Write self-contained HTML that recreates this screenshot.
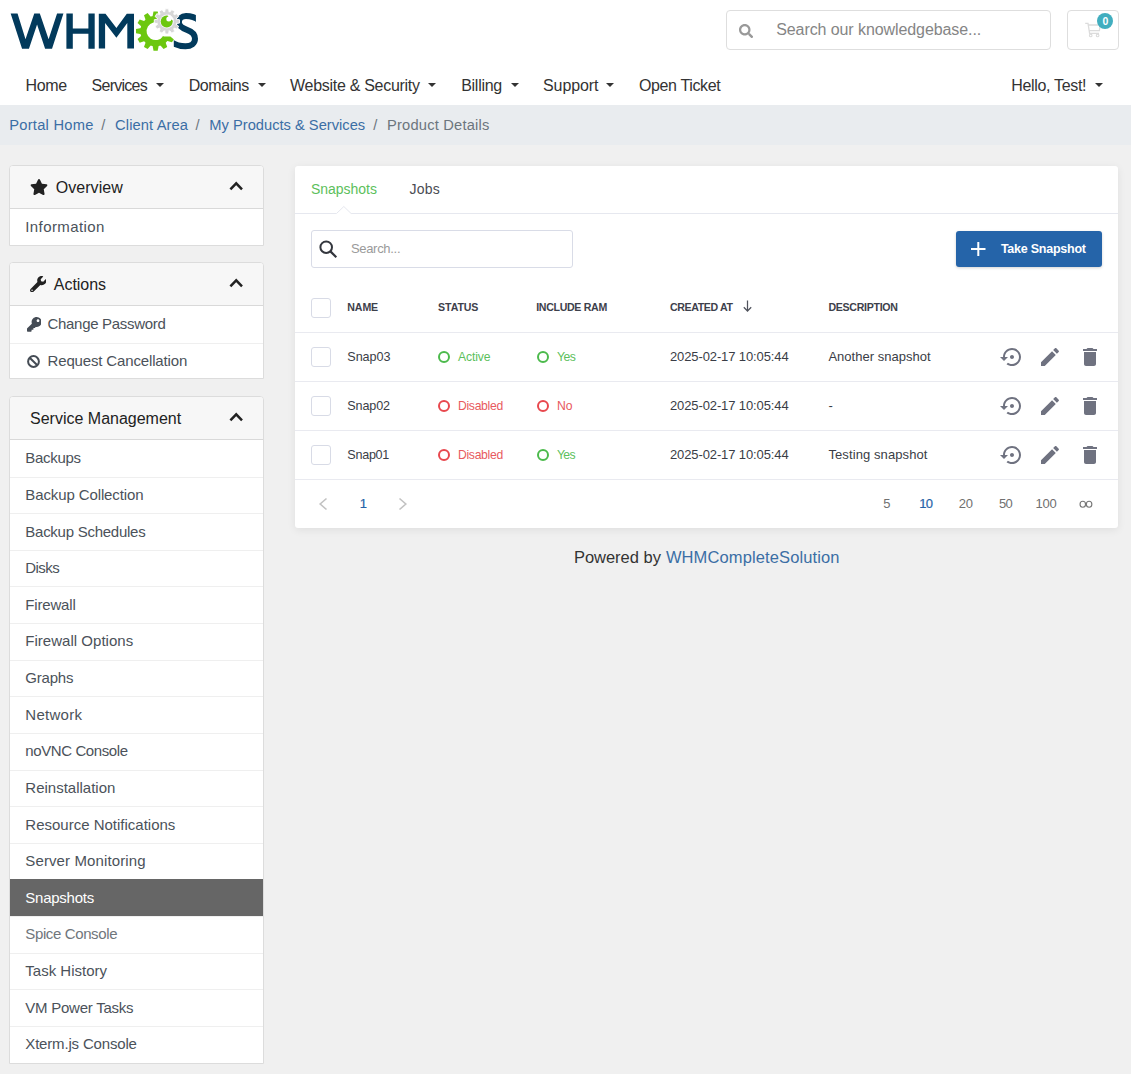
<!DOCTYPE html>
<html><head><meta charset="utf-8"><style>
*{box-sizing:border-box;margin:0;padding:0}
html,body{width:1131px;height:1074px;overflow:hidden;background:#f0f0f0;font-family:"Liberation Sans",sans-serif}
.a{position:absolute}
.t{position:absolute;white-space:nowrap;line-height:1}
.caret{position:absolute;width:0;height:0;border-left:4px solid transparent;border-right:4px solid transparent;border-top:4.5px solid #333;top:83px}
.card{position:absolute;left:9px;width:255px;background:#fff;border:1px solid #dcdcdc;border-radius:4px 4px 0 0;overflow:hidden}
.ch{position:absolute;left:0;top:0;width:100%;height:43px;background:#f7f7f7;border-bottom:1px solid #d9d9d9}
.li{position:absolute;left:0;width:100%;height:36.6px}
.li:before{content:"";position:absolute;left:0;top:0;width:100%;height:1px;background:#efefef}
.li.nb:before{display:none}
.act{background:#666}
.act:before{display:none}
.cb{position:absolute;width:19.6px;height:19.6px;border:1px solid #d8dbe6;border-radius:3px;background:#fff}
.rb{position:absolute;left:295px;width:823px;height:1px;background:#e9eaf0}
.dot{position:absolute;width:12px;height:12px;border:2px solid #4cba4c;border-radius:50%}
.dot.r{border-color:#e8484e}
</style></head><body>
<div class="a" style="left:0;top:0;width:1131px;height:105px;background:#fff"></div>
<!-- logo -->
<svg class="a" style="left:0;top:0" width="210" height="60" viewBox="0 0 210 60">
<g fill="#023a5c">
<polygon points="10.65,13.6 17.55,13.6 25.5,39.3 34.26,13.6 39.83,13.6 48.6,39.3 57.07,13.6 63.44,13.6 52.03,48.85 45.1,48.85 37.07,24.45 28.95,48.85 22.06,48.85"/>
<polygon points="66.4,13.6 72.8,13.6 72.8,28.6 88.4,28.6 88.4,13.6 94.7,13.6 94.7,48.85 88.4,48.85 88.4,33.8 72.8,33.8 72.8,48.85 66.4,48.85"/>
<polygon points="98.8,13.65 105.5,13.65 116.4,28.1 126.8,13.65 134,13.65 134,48.6 127.3,48.6 127.3,23.1 116.4,37.7 105.1,23.1 105.1,48.6 98.8,48.6"/>
</g>
<g fill="#6cc70f">
<path d="M168.28,39.66 A15.30,15.30 0 1 1 163.25,17.85 L160.10,23.31 A9.00,9.00 0 1 0 163.06,36.13 Z"/>
<polygon points="160.07,45.03 163.58,49.12 167.22,47.02 165.43,41.93"/><polygon points="152.50,45.40 153.50,50.70 157.70,50.70 158.70,45.40"/><polygon points="145.77,41.93 143.98,47.02 147.62,49.12 151.13,45.03"/><polygon points="141.67,35.57 137.58,39.08 139.68,42.72 144.77,40.93"/><polygon points="141.30,28.00 136.00,29.00 136.00,33.20 141.30,34.20"/><polygon points="144.77,21.27 139.68,19.48 137.58,23.12 141.67,26.63"/><polygon points="151.13,17.17 147.62,13.08 143.98,15.18 145.77,20.27"/><polygon points="158.70,16.80 157.70,11.50 153.50,11.50 152.50,16.80"/>
<polygon points="162.6,36.3 163.3,36.6 170.4,36.6 173.9,39.6 171.9,42.3 167.5,41 163.5,39.6"/>
</g>
<defs><clipPath id="sc"><path d="M173.8,0 H195.9 V27 H210 V60 H173.8 Z"/></clipPath></defs>
<path clip-path="url(#sc)" d="M199,20.5 C194.5,16.8 190,16.1 186,16.1 C181.5,16.1 178.9,18.8 178.9,22.3 C178.9,26.3 182.5,28.3 187,29.8 C192,31.5 195,34 195,38.8 C195,43.5 191,46.3 185.5,46.3 C181,46.3 175.5,45 171,42" fill="none" stroke="#023a5c" stroke-width="6"/>
<g fill="#d6d6d6" stroke="#fff" stroke-width="0.9">
<circle cx="166.90" cy="21.40" r="9.8"/>
<polygon points="175.70,23.70 179.50,23.10 179.50,19.70 175.70,19.10"/><polygon points="173.37,27.79 176.96,29.17 178.66,26.23 175.67,23.81"/><polygon points="169.31,30.17 171.73,33.16 174.67,31.46 173.29,27.87"/><polygon points="164.60,30.20 165.20,34.00 168.60,34.00 169.20,30.20"/><polygon points="160.51,27.87 159.13,31.46 162.07,33.16 164.49,30.17"/><polygon points="158.13,23.81 155.14,26.23 156.84,29.17 160.43,27.79"/><polygon points="158.10,19.10 154.30,19.70 154.30,23.10 158.10,23.70"/><polygon points="160.43,15.01 156.84,13.63 155.14,16.57 158.13,18.99"/><polygon points="164.49,12.63 162.07,9.64 159.13,11.34 160.51,14.93"/><polygon points="169.20,12.60 168.60,8.80 165.20,8.80 164.60,12.60"/><polygon points="173.29,14.93 174.67,11.34 171.73,9.64 169.31,12.63"/><polygon points="175.67,18.99 178.66,16.57 176.96,13.63 173.37,15.01"/>
</g>
<circle cx="166.90" cy="21.40" r="9.6" fill="#d6d6d6"/>
<circle cx="166.90" cy="21.40" r="7.0" fill="#f4f0fa"/>
<circle cx="166.70" cy="21.50" r="6.0" fill="#6cc70f"/>
<circle cx="168.8" cy="18.9" r="2.5" fill="#fff"/><polygon points="168.8,18.9 167.9,14.6 170.2,14.9 173.4,18.6 173.4,20.3" fill="#fff"/>
</svg>

<div class="a" style="left:726px;top:10px;width:325px;height:40px;border:1px solid #dedede;border-radius:4px;background:#fff"></div>
<svg class="a" style="left:739px;top:23.6px" width="14.2" height="14.2" viewBox="0 0 512 512"><path fill="#999" d="M505 442.7L405.3 343c-4.5-4.5-10.6-7-17-7H372c27.6-35.3 44-79.7 44-128C416 93.1 322.9 0 208 0S0 93.1 0 208s93.1 208 208 208c48.3 0 92.7-16.4 128-44v16.3c0 6.4 2.5 12.5 7 17l99.7 99.7c9.4 9.4 24.6 9.4 33.9 0l28.3-28.3c9.4-9.4 9.4-24.6.1-34zM208 336c-70.7 0-128-57.2-128-128 0-70.7 57.2-128 128-128 70.7 0 128 57.2 128 128 0 70.7-57.2 128-128 128z"/></svg>
<div class="t" style="left:776.20px;top:22.36px;font-size:16.00px;color:#858585;letter-spacing:-0.084px">Search our knowledgebase...</div>
<div class="a" style="left:1067px;top:10px;width:52px;height:40px;border:1px solid #dedede;border-radius:4px;background:#fff"></div>
<svg class="a" style="left:1084px;top:22px" width="18" height="16" viewBox="1084 22 18 16"><path d="M1085.2,23.3 H1088 L1089.6,33.4 H1099 M1088.4,25 H1100.2 L1099.4,30.7 H1089.2" fill="none" stroke="#dcdcdc" stroke-width="1.3"/><circle cx="1090.7" cy="35.4" r="1.3" fill="none" stroke="#dcdcdc" stroke-width="1.1"/><circle cx="1097.6" cy="35.4" r="1.3" fill="none" stroke="#dcdcdc" stroke-width="1.1"/></svg>
<div class="a" style="left:1097px;top:13px;width:16px;height:16px;border-radius:50%;background:#41aebf"></div>
<div class="t" style="left:1102.40px;top:16.41px;font-size:10.50px;color:#fff;font-weight:bold">0</div>
<div class="t" style="left:25.60px;top:77.96px;font-size:16.00px;color:#333;letter-spacing:-0.373px">Home</div>
<div class="t" style="left:91.60px;top:77.96px;font-size:16.00px;color:#333;letter-spacing:-0.751px">Services</div>
<div class="t" style="left:188.70px;top:77.96px;font-size:16.00px;color:#333;letter-spacing:-0.420px">Domains</div>
<div class="t" style="left:290.00px;top:77.96px;font-size:16.00px;color:#333;letter-spacing:-0.287px">Website &amp; Security</div>
<div class="t" style="left:461.20px;top:77.96px;font-size:16.00px;color:#333;letter-spacing:-0.270px">Billing</div>
<div class="t" style="left:543.00px;top:77.96px;font-size:16.00px;color:#333;letter-spacing:-0.080px">Support</div>
<div class="t" style="left:639.00px;top:77.96px;font-size:16.00px;color:#333;letter-spacing:-0.376px">Open Ticket</div>
<div class="t" style="left:1011.20px;top:77.96px;font-size:16.00px;color:#333;letter-spacing:-0.316px">Hello, Test!</div>
<div class="caret" style="left:156.0px"></div>
<div class="caret" style="left:258.0px"></div>
<div class="caret" style="left:428.0px"></div>
<div class="caret" style="left:510.5px"></div>
<div class="caret" style="left:606.0px"></div>
<div class="caret" style="left:1095.0px"></div>
<div class="a" style="left:0;top:105px;width:1131px;height:40px;background:#e9ecef"></div>
<div class="t" style="left:9.25px;top:117.96px;font-size:14.70px;color:#3b6ea5;letter-spacing:0.242px">Portal Home</div>
<div class="t" style="left:101.30px;top:117.96px;font-size:14.70px;color:#6c757d">/</div>
<div class="t" style="left:115.10px;top:117.96px;font-size:14.70px;color:#3b6ea5;letter-spacing:0.104px">Client Area</div>
<div class="t" style="left:195.50px;top:117.96px;font-size:14.70px;color:#6c757d">/</div>
<div class="t" style="left:209.30px;top:117.96px;font-size:14.70px;color:#3b6ea5">My Products &amp; Services</div>
<div class="t" style="left:373.30px;top:117.96px;font-size:14.70px;color:#6c757d">/</div>
<div class="t" style="left:387.00px;top:117.96px;font-size:14.70px;color:#6c757d;letter-spacing:0.195px">Product Details</div>
<div class="card" style="top:165px;height:81.0px">
 <div class="ch"></div>
<svg class="a" style="left:20.1px;top:13.2px" width="18" height="16" viewBox="0 0 576 512"><path fill="#222" d="M259.3 17.8L194 150.2 47.9 171.5c-26.2 3.8-36.7 36.1-17.7 54.6l105.7 103-25 145.5c-4.5 26.3 23.2 46 46.4 33.7L288 439.6l130.7 68.7c23.2 12.2 50.9-7.4 46.4-33.7l-25-145.5 105.7-103c19-18.5 8.5-50.8-17.7-54.6L382 150.2 316.7 17.8c-11.7-23.6-45.6-23.9-57.4 0z"/></svg>
<div class="t" style="left:45.70px;top:14.46px;font-size:16.00px;color:#222;letter-spacing:0.054px">Overview</div>
<svg class="a" style="left:219.3px;top:14.5px" width="15" height="10" viewBox="0 0 15 10"><polyline points="1.4,8.3 7.2,2.3 13,8.3" fill="none" stroke="#222" stroke-width="2.5"/></svg>
 <div class="li nb" style="top:43.00px">
<div class="t" style="left:15.30px;top:10.40px;font-size:15.00px;color:#4b525a;letter-spacing:0.403px">Information</div>
 </div>
</div>
<div class="card" style="top:262px;height:117.2px">
 <div class="ch"></div>
<svg class="a" style="left:19.8px;top:13px" width="16.4" height="16.4" viewBox="0 0 512 512"><path fill="#222" d="M507.73 109.1c-2.24-9.03-13.54-12.09-20.12-5.510l-74.36 74.36-67.88-11.31-11.31-67.88 74.36-74.36c6.62-6.62 3.43-17.9-5.660-20.16-47.38-11.74-99.55.91-136.58 37.930-39.64 39.640-50.55 97.1-34.05 147.2L18.74 402.76c-24.99 24.990-24.99 65.51 0 90.5 24.99 24.99 65.51 24.99 90.5 0l213.21-213.21c50.12 16.71 107.47 5.68 147.37-34.220 37.07-37.07 49.7-89.32 37.91-136.73zM64 472c-13.25 0-24-10.75-24-24 0-13.26 10.75-24 24-24s24 10.74 24 24c0 13.25-10.75 24-24 24z"/></svg>
<div class="t" style="left:43.80px;top:14.46px;font-size:16.00px;color:#222;letter-spacing:-0.030px">Actions</div>
<svg class="a" style="left:219.3px;top:14.5px" width="15" height="10" viewBox="0 0 15 10"><polyline points="1.4,8.3 7.2,2.3 13,8.3" fill="none" stroke="#222" stroke-width="2.5"/></svg>
 <div class="li nb" style="top:43.00px">
<svg class="a" style="left:16.6px;top:11px" width="14.7" height="14.7" viewBox="0 0 512 512"><path fill="#454c55" d="M512 176.001C512 273.203 433.202 352 336 352c-11.22 0-22.19-1.062-32.827-3.069l-24.012 27.014A23.999 23.999 0 0 1 261.223 384H224v40c0 13.255-10.745 24-24 24h-40v40c0 13.255-10.745 24-24 24H24c-13.255 0-24-10.745-24-24v-78.059c0-6.365 2.529-12.47 7.029-16.971l161.802-161.802C163.108 213.814 160 195.271 160 176 160 78.798 238.797.001 335.999 0 433.488-.001 512 78.511 512 176.001zM336 128c0 26.51 21.49 48 48 48s48-21.49 48-48-21.49-48-48-48-48 21.49-48 48z"/></svg>
<div class="t" style="left:37.50px;top:10.40px;font-size:15.00px;color:#4b525a;letter-spacing:-0.304px">Change Password</div>
 </div>
 <div class="li" style="top:79.62px">
<svg class="a" style="left:17px;top:12.1px" width="13" height="13" viewBox="0 0 13 13"><circle cx="6.5" cy="6.5" r="5.4" fill="none" stroke="#454c55" stroke-width="2"/><path d="M2.7,2.7 L10.3,10.3" stroke="#454c55" stroke-width="2"/></svg>
<div class="t" style="left:37.50px;top:10.40px;font-size:15.00px;color:#4b525a;letter-spacing:-0.146px">Request Cancellation</div>
 </div>
</div>
<div class="card" style="top:396px;height:667.5px">
 <div class="ch"></div>
<div class="t" style="left:20.00px;top:14.46px;font-size:16.00px;color:#222">Service Management</div>
<svg class="a" style="left:219.3px;top:14.5px" width="15" height="10" viewBox="0 0 15 10"><polyline points="1.4,8.3 7.2,2.3 13,8.3" fill="none" stroke="#222" stroke-width="2.5"/></svg>
 <div class="li nb" style="top:43.00px">
<div class="t" style="left:15.30px;top:10.40px;font-size:15.00px;color:#4b525a;letter-spacing:-0.304px">Backups</div>
 </div>
 <div class="li" style="top:79.62px">
<div class="t" style="left:15.30px;top:10.40px;font-size:15.00px;color:#4b525a;letter-spacing:-0.111px">Backup Collection</div>
 </div>
 <div class="li" style="top:116.24px">
<div class="t" style="left:15.30px;top:10.40px;font-size:15.00px;color:#4b525a;letter-spacing:-0.258px">Backup Schedules</div>
 </div>
 <div class="li" style="top:152.86px">
<div class="t" style="left:15.30px;top:10.40px;font-size:15.00px;color:#4b525a;letter-spacing:-0.569px">Disks</div>
 </div>
 <div class="li" style="top:189.48px">
<div class="t" style="left:15.30px;top:10.40px;font-size:15.00px;color:#4b525a;letter-spacing:-0.168px">Firewall</div>
 </div>
 <div class="li" style="top:226.10px">
<div class="t" style="left:15.30px;top:10.40px;font-size:15.00px;color:#4b525a;letter-spacing:0.023px">Firewall Options</div>
 </div>
 <div class="li" style="top:262.72px">
<div class="t" style="left:15.30px;top:10.40px;font-size:15.00px;color:#4b525a;letter-spacing:-0.220px">Graphs</div>
 </div>
 <div class="li" style="top:299.34px">
<div class="t" style="left:15.30px;top:10.40px;font-size:15.00px;color:#4b525a;letter-spacing:0.263px">Network</div>
 </div>
 <div class="li" style="top:335.96px">
<div class="t" style="left:15.30px;top:10.40px;font-size:15.00px;color:#4b525a;letter-spacing:-0.404px">noVNC Console</div>
 </div>
 <div class="li" style="top:372.58px">
<div class="t" style="left:15.30px;top:10.40px;font-size:15.00px;color:#4b525a">Reinstallation</div>
 </div>
 <div class="li" style="top:409.20px">
<div class="t" style="left:15.30px;top:10.40px;font-size:15.00px;color:#4b525a">Resource Notifications</div>
 </div>
 <div class="li" style="top:445.82px">
<div class="t" style="left:15.30px;top:10.40px;font-size:15.00px;color:#4b525a;letter-spacing:0.116px">Server Monitoring</div>
 </div>
 <div class="li act" style="top:482.44px">
<div class="t" style="left:15.30px;top:10.40px;font-size:15.00px;color:#fff;letter-spacing:-0.247px">Snapshots</div>
 </div>
 <div class="li" style="top:519.06px">
<div class="t" style="left:15.30px;top:10.40px;font-size:15.00px;color:#70767c;letter-spacing:-0.379px">Spice Console</div>
 </div>
 <div class="li" style="top:555.68px">
<div class="t" style="left:15.30px;top:10.40px;font-size:15.00px;color:#4b525a;letter-spacing:0.011px">Task History</div>
 </div>
 <div class="li" style="top:592.30px">
<div class="t" style="left:15.30px;top:10.40px;font-size:15.00px;color:#4b525a;letter-spacing:-0.250px">VM Power Tasks</div>
 </div>
 <div class="li" style="top:628.92px">
<div class="t" style="left:15.30px;top:10.40px;font-size:15.00px;color:#4b525a;letter-spacing:-0.175px">Xterm.js Console</div>
 </div>
</div>
<div class="a" style="left:295px;top:166px;width:823px;height:362px;background:#fff;border-radius:3px;box-shadow:0 2px 9px rgba(0,0,0,.075)"></div>
<div class="t" style="left:311.00px;top:181.95px;font-size:14.00px;color:#5cbf5c;letter-spacing:-0.031px">Snapshots</div>
<div class="t" style="left:409.50px;top:181.95px;font-size:14.00px;color:#4a4c53;letter-spacing:0.187px">Jobs</div>
<svg class="a" style="left:295px;top:205px" width="823" height="10" viewBox="0 0 823 10"><path d="M0,8.5 H41.5 L48.8,1.5 L56.1,8.5 H823" fill="none" stroke="#e6e8ef" stroke-width="1"/></svg>
<div class="a" style="left:311px;top:230px;width:262px;height:38px;border:1px solid #d9dce7;border-radius:3px"></div>
<svg class="a" style="left:319px;top:240px" width="19" height="18" viewBox="0 0 19 18"><circle cx="7.2" cy="7.2" r="5.8" fill="none" stroke="#33363d" stroke-width="2"/><path d="M11.4,11.4 L17.3,17.2" stroke="#33363d" stroke-width="2.2"/></svg>
<div class="t" style="left:350.90px;top:242.20px;font-size:13.00px;color:#9a9a9a;letter-spacing:-0.300px">Search...</div>
<div class="a" style="left:956px;top:231px;width:146px;height:36px;background:#2564a9;border-radius:3px;box-shadow:0 1px 3px rgba(0,0,0,.18)"></div>
<svg class="a" style="left:971px;top:242px" width="15" height="14" viewBox="0 0 15 14"><path d="M7.3,0 V14 M0,7 H14.5" stroke="#fff" stroke-width="2"/></svg>
<div class="t" style="left:1000.90px;top:243.32px;font-size:12.50px;color:#fff;font-weight:bold;letter-spacing:-0.242px">Take Snapshot</div>
<div class="cb" style="left:311.2px;top:298px"></div>
<div class="t" style="left:347.30px;top:302.23px;font-size:10.60px;color:#3d404b;font-weight:bold;letter-spacing:-0.106px">NAME</div>
<div class="t" style="left:438.10px;top:302.23px;font-size:10.60px;color:#3d404b;font-weight:bold;letter-spacing:-0.102px">STATUS</div>
<div class="t" style="left:536.20px;top:302.23px;font-size:10.60px;color:#3d404b;font-weight:bold;letter-spacing:-0.310px">INCLUDE RAM</div>
<div class="t" style="left:670.00px;top:302.23px;font-size:10.60px;color:#3d404b;font-weight:bold;letter-spacing:-0.373px">CREATED AT</div>
<div class="t" style="left:828.40px;top:302.23px;font-size:10.60px;color:#3d404b;font-weight:bold;letter-spacing:-0.285px">DESCRIPTION</div>
<svg class="a" style="left:743px;top:300px" width="9" height="12" viewBox="0 0 9 12"><path d="M4.5,0.5 V11 M0.8,7.3 L4.5,11 L8.2,7.3" fill="none" stroke="#50535d" stroke-width="1.25"/></svg>
<div class="rb" style="top:332px"></div>
<div class="cb" style="left:311.2px;top:347.2px"></div>
<div class="t" style="left:347.30px;top:350.93px;font-size:12.60px;color:#3a3d46;letter-spacing:-0.054px">Snap03</div>
<div class="dot" style="left:438px;top:351.2px"></div>
<div class="t" style="left:458.00px;top:350.67px;font-size:12.20px;color:#5cbf5c;letter-spacing:-0.129px">Active</div>
<div class="dot" style="left:537.2px;top:351.2px"></div>
<div class="t" style="left:557.00px;top:350.67px;font-size:12.20px;color:#5cbf5c;letter-spacing:-0.543px">Yes</div>
<div class="t" style="left:670.00px;top:350.00px;font-size:13.00px;color:#3a3d46;letter-spacing:-0.117px">2025-02-17 10:05:44</div>
<div class="t" style="left:828.40px;top:350.00px;font-size:13.00px;color:#3a3d46;letter-spacing:0.019px">Another snapshot</div>
<svg class="ic" style="left:999.8px;top:344.7px;position:absolute" width="24" height="24" viewBox="0 0 24 24"><path fill="#6f7280" d="M14 12c0-1.1-.9-2-2-2s-2 .9-2 2 .9 2 2 2 2-.9 2-2zm-2-9c-4.97 0-9 4.03-9 9H0l4 4 4-4H5c0-3.87 3.13-7 7-7s7 3.13 7 7-3.13 7-7 7c-1.51 0-2.91-.49-4.06-1.3l-1.42 1.44C8.04 20.3 9.94 21 12 21c4.97 0 9-4.03 9-9s-4.03-9-9-9z"/></svg>
<svg class="ic" style="left:1037.7px;top:345.0px;position:absolute" width="24" height="24" viewBox="0 0 24 24"><path fill="#6f7280" d="M3 17.25V21h3.75L17.81 9.94l-3.75-3.75L3 17.25zM20.71 7.04c.39-.39.39-1.02 0-1.41l-2.34-2.34c-.39-.39-1.02-.39-1.41 0l-1.83 1.83 3.75 3.75 1.83-1.83z"/></svg>
<svg class="ic" style="left:1077.8px;top:345.0px;position:absolute" width="24" height="24" viewBox="0 0 24 24"><path fill="#6f7280" d="M6 19c0 1.1.9 2 2 2h8c1.1 0 2-.9 2-2V7H6v12zM19 4h-3.5l-1-1h-5l-1 1H5v2h14V4z"/></svg>
<div class="rb" style="top:381px"></div>
<div class="cb" style="left:311.2px;top:396.2px"></div>
<div class="t" style="left:347.30px;top:399.93px;font-size:12.60px;color:#3a3d46;letter-spacing:-0.134px">Snap02</div>
<div class="dot r" style="left:438px;top:400.2px"></div>
<div class="t" style="left:458.00px;top:399.67px;font-size:12.20px;color:#e85a5e;letter-spacing:-0.323px">Disabled</div>
<div class="dot r" style="left:537.2px;top:400.2px"></div>
<div class="t" style="left:557.00px;top:399.67px;font-size:12.20px;color:#e85a5e">No</div>
<div class="t" style="left:670.00px;top:399.00px;font-size:13.00px;color:#3a3d46;letter-spacing:-0.117px">2025-02-17 10:05:44</div>
<div class="t" style="left:828.40px;top:399.00px;font-size:13.00px;color:#3a3d46">-</div>
<svg class="ic" style="left:999.8px;top:393.7px;position:absolute" width="24" height="24" viewBox="0 0 24 24"><path fill="#6f7280" d="M14 12c0-1.1-.9-2-2-2s-2 .9-2 2 .9 2 2 2 2-.9 2-2zm-2-9c-4.97 0-9 4.03-9 9H0l4 4 4-4H5c0-3.87 3.13-7 7-7s7 3.13 7 7-3.13 7-7 7c-1.51 0-2.91-.49-4.06-1.3l-1.42 1.44C8.04 20.3 9.94 21 12 21c4.97 0 9-4.03 9-9s-4.03-9-9-9z"/></svg>
<svg class="ic" style="left:1037.7px;top:394.0px;position:absolute" width="24" height="24" viewBox="0 0 24 24"><path fill="#6f7280" d="M3 17.25V21h3.75L17.81 9.94l-3.75-3.75L3 17.25zM20.71 7.04c.39-.39.39-1.02 0-1.41l-2.34-2.34c-.39-.39-1.02-.39-1.41 0l-1.83 1.83 3.75 3.75 1.83-1.83z"/></svg>
<svg class="ic" style="left:1077.8px;top:394.0px;position:absolute" width="24" height="24" viewBox="0 0 24 24"><path fill="#6f7280" d="M6 19c0 1.1.9 2 2 2h8c1.1 0 2-.9 2-2V7H6v12zM19 4h-3.5l-1-1h-5l-1 1H5v2h14V4z"/></svg>
<div class="rb" style="top:430px"></div>
<div class="cb" style="left:311.2px;top:445.2px"></div>
<div class="t" style="left:347.30px;top:448.93px;font-size:12.60px;color:#3a3d46;letter-spacing:-0.274px">Snap01</div>
<div class="dot r" style="left:438px;top:449.2px"></div>
<div class="t" style="left:458.00px;top:448.67px;font-size:12.20px;color:#e85a5e;letter-spacing:-0.323px">Disabled</div>
<div class="dot" style="left:537.2px;top:449.2px"></div>
<div class="t" style="left:557.00px;top:448.67px;font-size:12.20px;color:#5cbf5c;letter-spacing:-0.643px">Yes</div>
<div class="t" style="left:670.00px;top:448.00px;font-size:13.00px;color:#3a3d46;letter-spacing:-0.117px">2025-02-17 10:05:44</div>
<div class="t" style="left:828.40px;top:448.00px;font-size:13.00px;color:#3a3d46;letter-spacing:0.102px">Testing snapshot</div>
<svg class="ic" style="left:999.8px;top:442.7px;position:absolute" width="24" height="24" viewBox="0 0 24 24"><path fill="#6f7280" d="M14 12c0-1.1-.9-2-2-2s-2 .9-2 2 .9 2 2 2 2-.9 2-2zm-2-9c-4.97 0-9 4.03-9 9H0l4 4 4-4H5c0-3.87 3.13-7 7-7s7 3.13 7 7-3.13 7-7 7c-1.51 0-2.91-.49-4.06-1.3l-1.42 1.44C8.04 20.3 9.94 21 12 21c4.97 0 9-4.03 9-9s-4.03-9-9-9z"/></svg>
<svg class="ic" style="left:1037.7px;top:443.0px;position:absolute" width="24" height="24" viewBox="0 0 24 24"><path fill="#6f7280" d="M3 17.25V21h3.75L17.81 9.94l-3.75-3.75L3 17.25zM20.71 7.04c.39-.39.39-1.02 0-1.41l-2.34-2.34c-.39-.39-1.02-.39-1.41 0l-1.83 1.83 3.75 3.75 1.83-1.83z"/></svg>
<svg class="ic" style="left:1077.8px;top:443.0px;position:absolute" width="24" height="24" viewBox="0 0 24 24"><path fill="#6f7280" d="M6 19c0 1.1.9 2 2 2h8c1.1 0 2-.9 2-2V7H6v12zM19 4h-3.5l-1-1h-5l-1 1H5v2h14V4z"/></svg>
<div class="rb" style="top:479px"></div>
<svg class="a" style="left:318px;top:497px" width="10" height="14" viewBox="0 0 10 14"><polyline points="8.5,1.5 2.2,7 8.5,12.5" fill="none" stroke="#c2c2c2" stroke-width="1.6"/></svg>
<svg class="a" style="left:398px;top:497px" width="10" height="14" viewBox="0 0 10 14"><polyline points="1.5,1.5 7.8,7 1.5,12.5" fill="none" stroke="#c2c2c2" stroke-width="1.6"/></svg>
<div class="t" style="left:359.80px;top:497.20px;font-size:13.00px;color:#2663a8;-webkit-text-stroke:0.2px #2663a8">1</div>
<div class="t" style="left:883.20px;top:497.20px;font-size:13.00px;color:#707070">5</div>
<div class="t" style="left:919.20px;top:497.20px;font-size:13.00px;color:#2663a8;letter-spacing:-0.630px;-webkit-text-stroke:0.2px #2663a8">10</div>
<div class="t" style="left:958.70px;top:497.20px;font-size:13.00px;color:#707070;letter-spacing:-0.130px">20</div>
<div class="t" style="left:999.00px;top:497.20px;font-size:13.00px;color:#707070;letter-spacing:-0.630px">50</div>
<div class="t" style="left:1035.50px;top:497.20px;font-size:13.00px;color:#707070;letter-spacing:-0.255px">100</div>
<svg class="a" style="left:1078px;top:499px" width="16" height="11" viewBox="0 0 16 11"><ellipse cx="4.8" cy="5.25" rx="2.75" ry="3.0" fill="none" stroke="#777" stroke-width="1.15"/><ellipse cx="11.1" cy="5.25" rx="2.75" ry="3.0" fill="none" stroke="#777" stroke-width="1.15"/></svg>
<div class="t" style="left:573.90px;top:548.63px;font-size:16.50px;color:#333;letter-spacing:-0.013px">Powered by</div>
<div class="t" style="left:665.90px;top:548.63px;font-size:16.50px;color:#3b6ea5;letter-spacing:0.116px">WHMCompleteSolution</div>
</body></html>
